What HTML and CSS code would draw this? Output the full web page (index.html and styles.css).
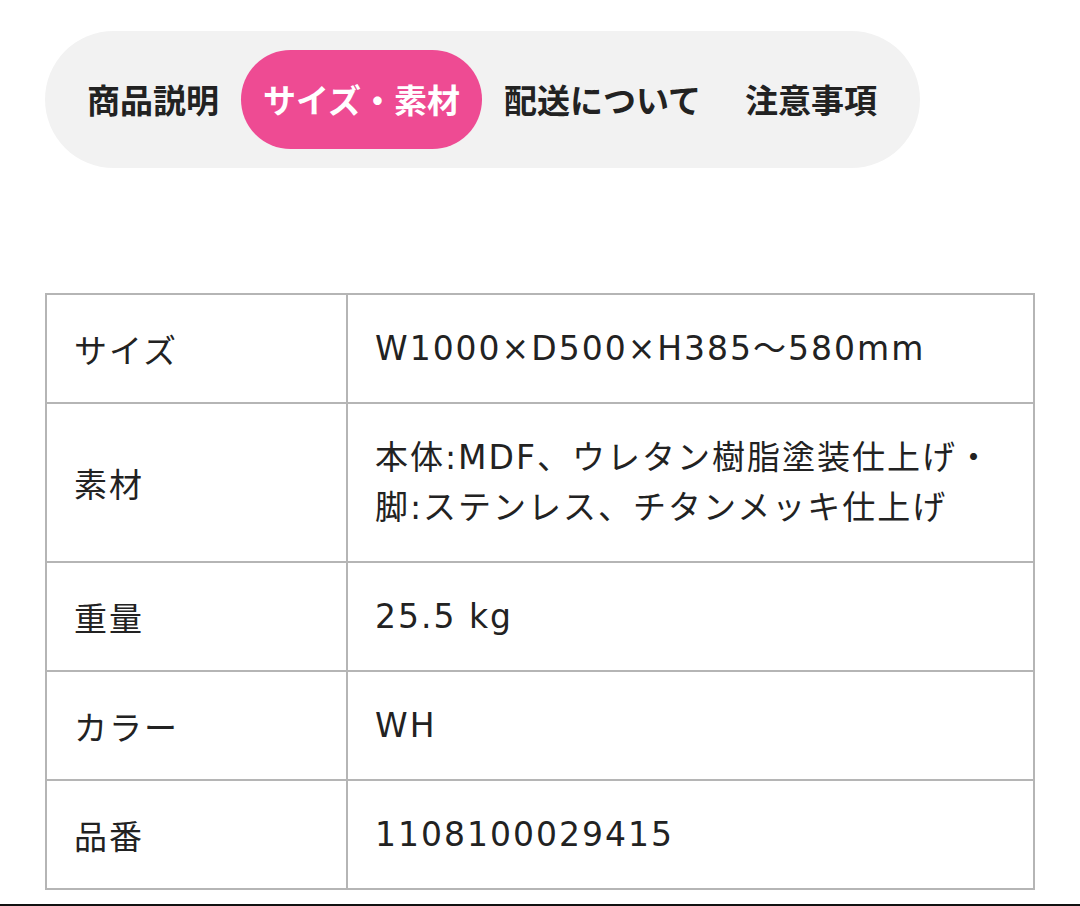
FILE: index.html
```html
<!DOCTYPE html>
<html lang="ja">
<head>
<meta charset="utf-8">
<title>商品情報</title>
<link rel="stylesheet" href="styles.css">
</head>
<body>
<div class="page">
  <nav class="tabs">
    <span class="tab">商品説明</span>
    <span class="tab tab-active">サイズ・素材</span>
    <span class="tab">配送について</span>
    <span class="tab">注意事項</span>
  </nav>
  <table class="spec">
    <tr><th>サイズ</th><td>W1000×D500×H385〜580mm</td></tr>
    <tr><th>素材</th><td>本体:MDF、ウレタン樹脂塗装仕上げ・<br>脚:ステンレス、チタンメッキ仕上げ</td></tr>
    <tr><th>重量</th><td>25.5 kg</td></tr>
    <tr><th>カラー</th><td>WH</td></tr>
    <tr><th>品番</th><td>1108100029415</td></tr>
  </table>
</div>
<div class="bottom-line"></div>
</body>
</html>
```
FILE: styles.css
```css
html, body {
  margin: 0;
  padding: 0;
  background: #ffffff;
}
body {
  font-family: "Noto Sans CJK JP", "Noto Sans", sans-serif;
  color: #222222;
  overflow: hidden;
}
.page {
  padding: 31px 45px 0;
}
.tabs {
  display: inline-flex;
  align-items: center;
  background: #f2f2f2;
  border-radius: 70px;
  padding: 19px 21px 19px 20px;
}
.tab {
  font-size: 33px;
  font-weight: 700;
  line-height: 49px;
  padding: 25px 22px;
  border-radius: 50px;
  color: #222222;
  white-space: nowrap;
}
.tab-active {
  background: #ee4b93;
  color: #ffffff;
}
.spec {
  margin-top: 125px;
  width: 990px;
  border-collapse: collapse;
  font-family: "DejaVu Sans", "Noto Sans CJK JP", sans-serif;
  font-size: 33px;
  letter-spacing: 2px;
  line-height: 50px;
}
.spec th, .spec td {
  border: 2px solid #b5b5b5;
  padding: 28.5px 26px 28.5px 27px;
  text-align: left;
  font-weight: 400;
  vertical-align: middle;
  color: #222222;
}
.spec th {
  width: 246px;
  font-family: "Noto Sans CJK JP", sans-serif;
}
.spec td {
  font-family: "DejaVu Sans", "Noto Sans CJK JP", sans-serif;
}
.bottom-line {
  margin-top: 14px;
  height: 3px;
  background: #111111;
}
```
